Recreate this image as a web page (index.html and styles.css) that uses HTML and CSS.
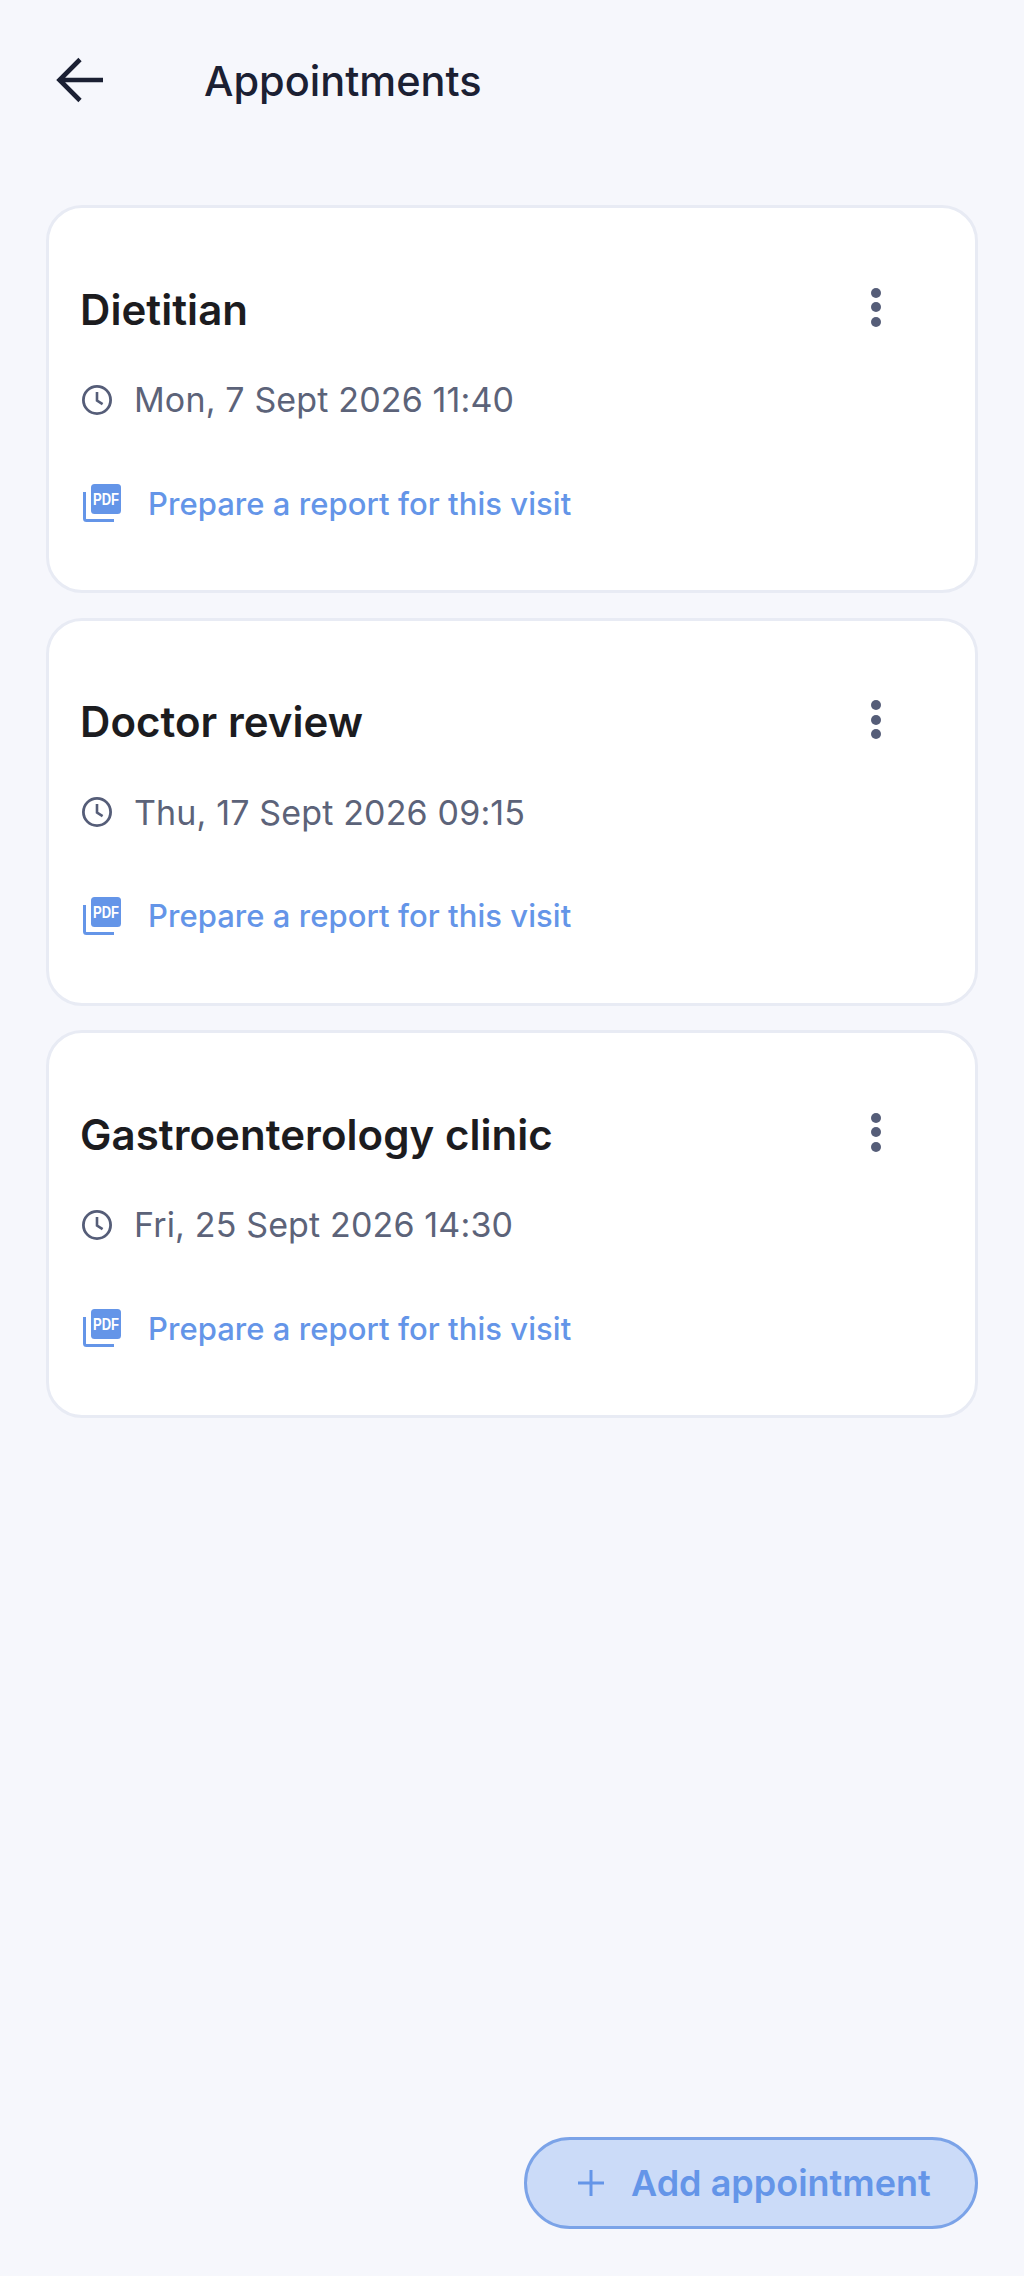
FILE: index.html
```html
<!DOCTYPE html>
<html lang="en">
<head>
    <meta charset="UTF-8">
    <title>Appointments</title>
    <link rel="stylesheet" href="styles.css">
</head>
<body>
    <div class="screen">
        <header class="topbar">
            <svg class="back-icon" viewBox="0 0 48 48"><path d="M47 24H4M24 3.5 3.5 24 24 44.5" fill="none" stroke="#1b2033" stroke-width="4.6"/></svg>
            <h1 class="page-title">Appointments</h1>
        </header>

        <main class="card-list">
            <section class="card">
                <div class="card-head">
                    <h2 class="card-title">Dietitian</h2>
                    <div class="more"><span></span><span></span><span></span></div>
                </div>
                <div class="when">
                    <svg class="clock-icon" viewBox="0 0 32 32"><circle cx="16" cy="16" r="13.6" fill="none" stroke="#555d78" stroke-width="2.8"/><path d="M16 8v8.6l5.6 3.6" fill="none" stroke="#555d78" stroke-width="2.6"/></svg>
                    <span>Mon, 7 Sept 2026 11:40</span>
                </div>
                <div class="report">
                    <svg class="pdf-icon" viewBox="0 0 38 38"><path d="M1.5 8v26.5a2 2 0 0 0 2 2H31" fill="none" stroke="#6495e8" stroke-width="3"/><rect x="8" y="0" width="30" height="30" rx="3.5" fill="#6495e8"/><text transform="translate(23 21) scale(1 1.3)" class="pdf-label">PDF</text></svg>
                    <span>Prepare a report for this visit</span>
                </div>
            </section>

            <section class="card">
                <div class="card-head">
                    <h2 class="card-title">Doctor review</h2>
                    <div class="more"><span></span><span></span><span></span></div>
                </div>
                <div class="when">
                    <svg class="clock-icon" viewBox="0 0 32 32"><circle cx="16" cy="16" r="13.6" fill="none" stroke="#555d78" stroke-width="2.8"/><path d="M16 8v8.6l5.6 3.6" fill="none" stroke="#555d78" stroke-width="2.6"/></svg>
                    <span>Thu, 17 Sept 2026 09:15</span>
                </div>
                <div class="report">
                    <svg class="pdf-icon" viewBox="0 0 38 38"><path d="M1.5 8v26.5a2 2 0 0 0 2 2H31" fill="none" stroke="#6495e8" stroke-width="3"/><rect x="8" y="0" width="30" height="30" rx="3.5" fill="#6495e8"/><text transform="translate(23 21) scale(1 1.3)" class="pdf-label">PDF</text></svg>
                    <span>Prepare a report for this visit</span>
                </div>
            </section>

            <section class="card">
                <div class="card-head">
                    <h2 class="card-title">Gastroenterology clinic</h2>
                    <div class="more"><span></span><span></span><span></span></div>
                </div>
                <div class="when">
                    <svg class="clock-icon" viewBox="0 0 32 32"><circle cx="16" cy="16" r="13.6" fill="none" stroke="#555d78" stroke-width="2.8"/><path d="M16 8v8.6l5.6 3.6" fill="none" stroke="#555d78" stroke-width="2.6"/></svg>
                    <span>Fri, 25 Sept 2026 14:30</span>
                </div>
                <div class="report">
                    <svg class="pdf-icon" viewBox="0 0 38 38"><path d="M1.5 8v26.5a2 2 0 0 0 2 2H31" fill="none" stroke="#6495e8" stroke-width="3"/><rect x="8" y="0" width="30" height="30" rx="3.5" fill="#6495e8"/><text transform="translate(23 21) scale(1 1.3)" class="pdf-label">PDF</text></svg>
                    <span>Prepare a report for this visit</span>
                </div>
            </section>
        </main>

        <footer class="actions">
            <button class="add-btn">
                <svg class="plus-icon" viewBox="0 0 28 28"><path d="M14 1v26M1 14h26" fill="none" stroke="#6495e8" stroke-width="3"/></svg>
                <span>Add appointment</span>
            </button>
        </footer>
    </div>
</body>
</html>
```

FILE: styles.css
```css
html, body {
    margin: 0;
    height: 100%;
}
body {
    font-family: Inter, "Noto Sans", sans-serif;
    background-color: #f6f7fc;
}
.screen {
    display: flex;
    flex-direction: column;
    height: 2276px;
    box-sizing: border-box;
    padding: 0 46px 47px;
}
.topbar {
    display: flex;
    align-items: center;
    height: 160px;
    margin-bottom: 45px;
}
.back-icon {
    width: 48px;
    height: 48px;
    margin-left: 10px;
}
.page-title {
    margin: 2px 0 0 100px;
    font-size: 41.5px;
    font-weight: 500;
    color: #1b2033;
}
.card-list {
    display: flex;
    flex-direction: column;
    gap: 24.5px;
}
.card {
    box-sizing: border-box;
    height: 388px;
    padding: 77px 31px 0;
    background: white;
    border: 3px solid #e8ebf4;
    border-radius: 36px;
}
.card-head {
    display: flex;
    justify-content: space-between;
    align-items: center;
    height: 48px;
}
.card-title {
    margin: 0;
    font-size: 42px;
    font-weight: 600;
    letter-spacing: 0.05px;
    color: #1c1c1f;
}
.more {
    display: flex;
    flex-direction: column;
    gap: 4.5px;
    margin-right: 63px;
    margin-top: -4px;
}
.more span {
    width: 10px;
    height: 10px;
    border-radius: 50%;
    background: #555d78;
}
.when {
    display: flex;
    align-items: center;
    gap: 21px;
    margin-top: 46px;
    font-size: 34px;
    letter-spacing: 0.15px;
    color: #5c6379;
}
.clock-icon {
    width: 32px;
    height: 32px;
    margin-left: 1px;
}
.report {
    display: flex;
    align-items: center;
    gap: 27px;
    margin-top: 64px;
    font-size: 31px;
    font-weight: 500;
    letter-spacing: 0.05px;
    color: #6495e8;
}
.pdf-icon {
    width: 38px;
    height: 38px;
    margin-left: 3px;
}
.pdf-label {
    font-family: "Liberation Sans", sans-serif;
    font-size: 13px;
    font-weight: 700;
    fill: white;
    text-anchor: middle;
}
.actions {
    display: flex;
    justify-content: flex-end;
    margin-top: auto;
}
.add-btn {
    display: flex;
    align-items: center;
    gap: 26px;
    box-sizing: border-box;
    width: 454px;
    height: 92px;
    padding: 0 0 0 50px;
    font-family: inherit;
    font-size: 36px;
    font-weight: 600;
    color: #6495e8;
    background: #cbdbf8;
    border: 3px solid #7ba3e8;
    border-radius: 46px;
}
.plus-icon {
    width: 28px;
    height: 28px;
}
```
